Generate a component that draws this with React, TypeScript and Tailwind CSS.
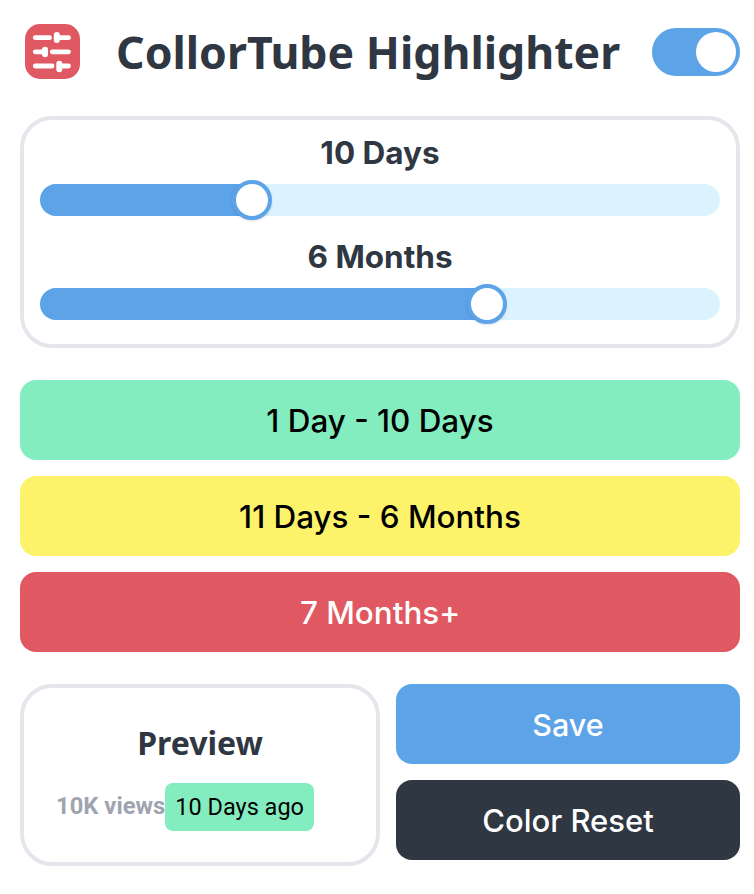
const blue = 'bg-[#5da3e8]';

function LogoIcon() {
  return (
    <svg width="55" height="55" viewBox="0 0 55 55" className="shrink-0 self-start">
      <rect x="0" y="0" width="55" height="55" rx="15" fill="#e05861" />
      <g stroke="#ffffff" strokeLinecap="round" fill="none">
        <path d="M10.3 13.7H24.5" strokeWidth="4.8" />
        <path d="M32 13.7H43.5" strokeWidth="4.8" />
        <path d="M31.8 11V16" strokeWidth="6" />
        <path d="M10.3 27.8H20" strokeWidth="4.8" />
        <path d="M27.3 27.8H43.5" strokeWidth="4.8" />
        <path d="M20 25.7V30.3" strokeWidth="6" />
        <path d="M10.3 42H27" strokeWidth="4.8" />
        <path d="M34.3 42H43.5" strokeWidth="4.8" />
        <path d="M34.3 39.7V45.3" strokeWidth="6" />
      </g>
    </svg>
  );
}

function Slider({ label, fill }: { label: string; fill: string }) {
  return (
    <div className="flex flex-col items-center">
      <p className="text-[31.5px] leading-[40px] font-bold text-[#2f3742] font-['Inter',sans-serif]">{label}</p>
      <div className="relative mt-[11px] h-[32px] w-full rounded-[16px] bg-[#dbf3fe]">
        <div className={`h-full rounded-l-[16px] ${blue} ${fill}`} />
        <div className={`absolute top-[-4px] h-[40px] w-[40px] -translate-x-1/2 rounded-full border-4 border-[#5da3e8] bg-white shadow-sm ${fill === 'w-[212px]' ? 'left-[212px]' : 'left-[447px]'}`} />
      </div>
    </div>
  );
}

function RangeButton({ label, className }: { label: string; className: string }) {
  return (
    <div className={`flex h-[80px] items-center justify-center rounded-[16px] pt-[3px] text-[31.4px] font-medium font-['Inter',sans-serif] ${className}`}>
      {label}
    </div>
  );
}

export default function App() {
  return (
    <div className="flex h-[894px] w-[754px] flex-col bg-white pt-[24px] pr-[14px] pl-[20px] font-['Inter',sans-serif]">
      <header className="flex h-[56px] items-center pl-[5px]">
        <LogoIcon />
        <h1 className="ml-[36px] text-[44.6px] font-bold text-[#2f3742] font-['Noto_Sans',sans-serif]">CollorTube Highlighter</h1>
        <div className="ml-auto flex h-[48px] w-[88px] items-center justify-end rounded-full bg-[#5da3e8] pr-[4px]">
          <div className="h-[40px] w-[40px] rounded-full bg-white" />
        </div>
      </header>

      <section className="mt-[36px] flex h-[232px] flex-col gap-[21px] rounded-[32px] border-4 border-[#e5e5ec] px-[16px] pt-[13px]">
        <Slider label="10 Days" fill="w-[212px]" />
        <Slider label="6 Months" fill="w-[447px]" />
      </section>

      <div className="mt-[32px] flex flex-col gap-[16px]">
        <RangeButton label="1 Day - 10 Days" className="bg-[#84edc0] text-black" />
        <RangeButton label="11 Days - 6 Months" className="bg-[#fcf36b] text-black" />
        <RangeButton label="7 Months+" className="bg-[#e05861] text-white" />
      </div>

      <div className="mt-[32px] flex gap-[16px]">
        <section className="flex h-[182px] w-[360px] flex-col items-center rounded-[32px] border-4 border-[#e5e5ec] pt-[33px]">
          <h2 className="text-[32px] leading-[44px] font-bold text-[#2f3742] font-['Noto_Sans',sans-serif]">Preview</h2>
          <div className="mt-[18px] mr-[30px] flex items-center font-['Roboto',sans-serif]">
            <span className="text-[23.8px] font-bold text-[#a0a4b0]">10K views</span>
            <span className="rounded-[8px] bg-[#84edc0] px-[10px] py-[8px] text-[23.5px] leading-[32px] text-black">10 Days ago</span>
          </div>
        </section>
        <div className="flex flex-1 flex-col gap-[16px]">
          <div className={`flex h-[80px] items-center justify-center rounded-[16px] pt-[2px] text-[30.5px] font-medium text-white ${blue}`}>Save</div>
          <div className="flex h-[80px] items-center justify-center rounded-[16px] bg-[#2f3742] pt-[2px] text-[31px] font-medium text-white">Color Reset</div>
        </div>
      </div>
    </div>
  );
}
